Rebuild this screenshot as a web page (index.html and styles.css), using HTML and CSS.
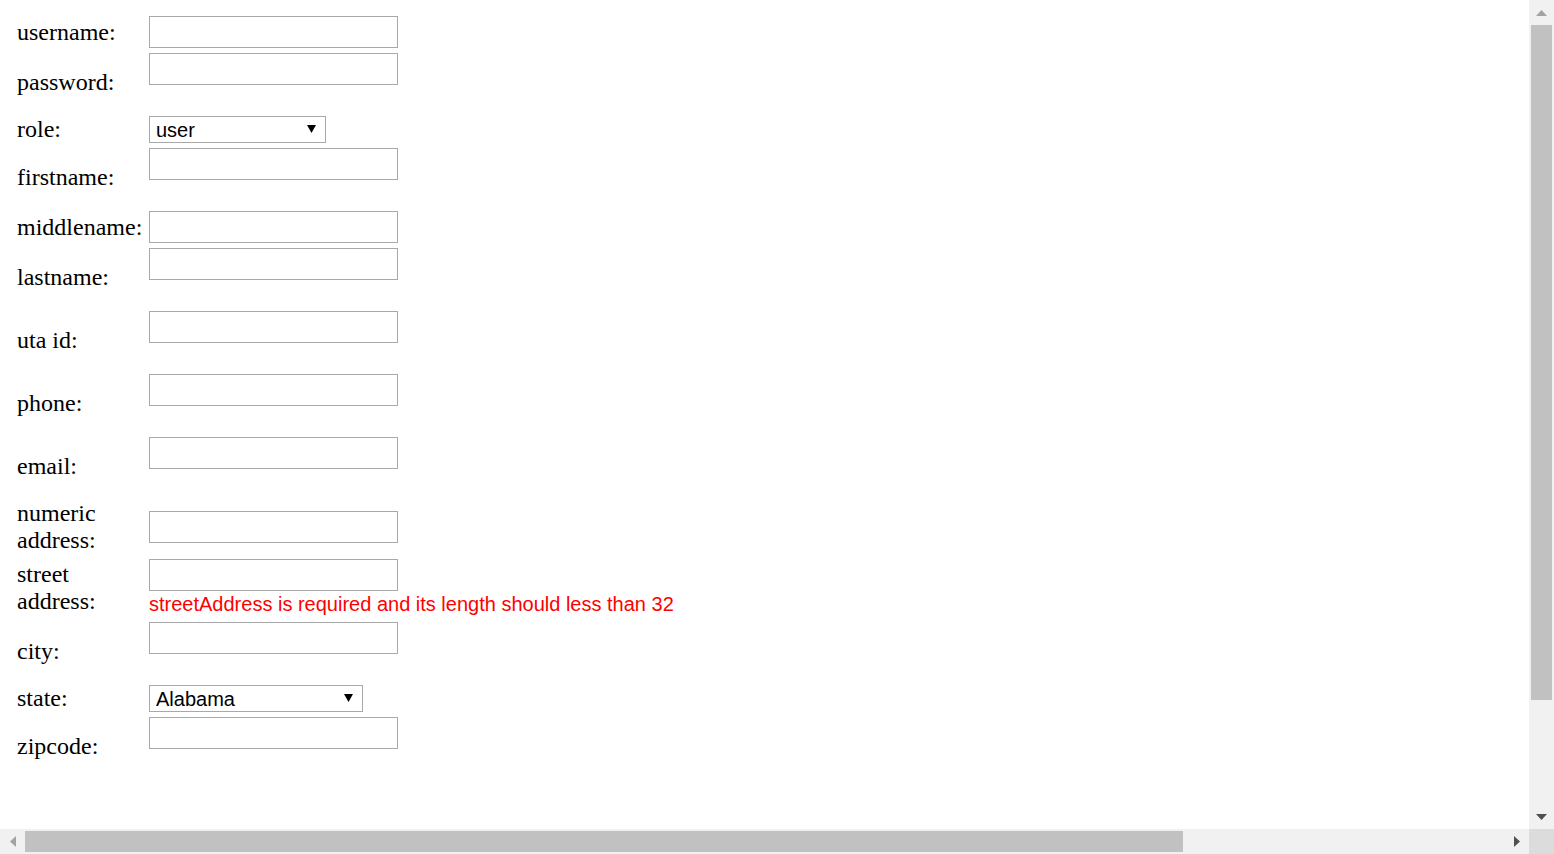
FILE: index.html
```html
<!DOCTYPE html>
<html lang="en">
<head>
<meta charset="utf-8">
<title>Register</title>
<link rel="stylesheet" href="styles.css">
</head>
<body>
<form class="reg-form">
  <table class="form-table">
    <tbody>
      <tr>
        <td class="lbl">username:</td>
        <td class="fld"><input class="txt" type="text" name="username"></td>
      </tr>
      <tr>
        <td class="lbl">password:</td>
        <td class="fld"><input class="txt" type="password" name="password"><div class="err"></div></td>
      </tr>
      <tr>
        <td class="lbl">role:</td>
        <td class="fld">
          <span class="sel">
            <select class="selbox sel-role" name="role">
              <option>user</option>
              <option>admin</option>
            </select>
            <svg class="caret" width="9" height="8" viewBox="0 0 9 8"><polygon points="0,0 9,0 4.5,8" fill="#000"/></svg>
          </span>
        </td>
      </tr>
      <tr>
        <td class="lbl">firstname:</td>
        <td class="fld"><input class="txt" type="text" name="firstname"><div class="err"></div></td>
      </tr>
      <tr>
        <td class="lbl">middlename:</td>
        <td class="fld"><input class="txt" type="text" name="middlename"></td>
      </tr>
      <tr>
        <td class="lbl">lastname:</td>
        <td class="fld"><input class="txt" type="text" name="lastname"><div class="err"></div></td>
      </tr>
      <tr>
        <td class="lbl">uta id:</td>
        <td class="fld"><input class="txt" type="text" name="utaid"><div class="err"></div></td>
      </tr>
      <tr>
        <td class="lbl">phone:</td>
        <td class="fld"><input class="txt" type="text" name="phone"><div class="err"></div></td>
      </tr>
      <tr>
        <td class="lbl">email:</td>
        <td class="fld"><input class="txt" type="text" name="email"><div class="err"></div></td>
      </tr>
      <tr>
        <td class="lbl">numeric address:</td>
        <td class="fld"><input class="txt" type="text" name="numericAddress"></td>
      </tr>
      <tr>
        <td class="lbl">street address:</td>
        <td class="fld"><input class="txt" type="text" name="streetAddress"><div class="err">streetAddress is required and its length should less than 32</div></td>
      </tr>
      <tr>
        <td class="lbl">city:</td>
        <td class="fld"><input class="txt" type="text" name="city"><div class="err"></div></td>
      </tr>
      <tr>
        <td class="lbl">state:</td>
        <td class="fld">
          <span class="sel">
            <select class="selbox sel-state" name="state">
              <option>Alabama</option>
              <option>Alaska</option>
              <option>Arizona</option>
              <option>Arkansas</option>
              <option>California</option>
              <option>Colorado</option>
              <option>Connecticut</option>
              <option>Delaware</option>
              <option>Florida</option>
              <option>Georgia</option>
              <option>Texas</option>
            </select>
            <svg class="caret" width="9" height="8" viewBox="0 0 9 8"><polygon points="0,0 9,0 4.5,8" fill="#000"/></svg>
          </span>
        </td>
      </tr>
      <tr>
        <td class="lbl">zipcode:</td>
        <td class="fld"><input class="txt" type="text" name="zipcode"><div class="err"></div></td>
      </tr>
    </tbody>
  </table>
</form>

<div class="vbar" aria-hidden="true">
  <div class="sb-btn"><svg width="11" height="6" viewBox="0 0 11 6"><polygon points="5.5,0 11,6 0,6" fill="#a3a3a3"/></svg></div>
  <div class="vthumb"></div>
  <div class="sb-fill"></div>
  <div class="sb-btn"><svg width="11" height="6" viewBox="0 0 11 6"><polygon points="0,0 11,0 5.5,6" fill="#505050"/></svg></div>
</div>
<div class="hbar" aria-hidden="true">
  <div class="sb-btn"><svg width="6" height="11" viewBox="0 0 6 11"><polygon points="0,5.5 6,0 6,11" fill="#a3a3a3"/></svg></div>
  <div class="hthumb"></div>
  <div class="sb-fill"></div>
  <div class="sb-btn"><svg width="6" height="11" viewBox="0 0 6 11"><polygon points="0,0 6,5.5 0,11" fill="#505050"/></svg></div>
</div>
<div class="sb-corner" aria-hidden="true"></div>
</body>
</html>
```

FILE: styles.css
```css
html, body {
  overflow: hidden;
}

body {
  margin: 12px;
  background: #fff;
  color: #000;
  font-family: "Liberation Serif", "Times New Roman", serif;
  font-size: 24px;
}

.reg-form {
  margin: 0;
}

.form-table {
  border-collapse: separate;
  border-spacing: 3px;
}

.form-table td {
  padding: 1px;
  vertical-align: middle;
}

.form-table td.lbl {
  width: 127px;
  padding-left: 2px;
  font-family: "Liberation Serif", "Times New Roman", serif;
  font-size: 24px;
  line-height: 27px;
}

.fld {
  font-family: "Liberation Sans", Arial, sans-serif;
  font-size: 20px;
}

.txt {
  display: block;
  box-sizing: border-box;
  width: 249px;
  height: 32px;
  margin: 0;
  padding: 0 3px;
  border: 1px solid #a9a9a9;
  border-radius: 0;
  background: #fff;
  font-family: "Liberation Sans", Arial, sans-serif;
  font-size: 20px;
  outline: none;
}

.err {
  height: 26px;
  line-height: 26px;
  font-family: "Liberation Sans", Arial, sans-serif;
  font-size: 20px;
  color: #ff0000;
  white-space: nowrap;
}

.sel {
  position: relative;
  display: block;
  width: max-content;
}

.selbox {
  display: block;
  box-sizing: border-box;
  height: 27px;
  margin: 0;
  padding: 1px 0 0 6px;
  border: 1px solid #a9a9a9;
  border-radius: 0;
  background: #fff;
  color: #000;
  font-family: "Liberation Sans", Arial, sans-serif;
  font-size: 20px;
  line-height: 23px;
  -webkit-appearance: none;
  appearance: none;
  outline: none;
}

.sel-role {
  width: 177px;
}

.sel-state {
  width: 214px;
}

.caret {
  position: absolute;
  top: 9px;
  right: 10px;
  pointer-events: none;
}

/* emulated window scrollbars */
.vbar {
  position: fixed;
  top: 0;
  right: 0;
  width: 25px;
  height: 829px;
  background: #f1f1f1;
  display: flex;
  flex-direction: column;
}

.hbar {
  position: fixed;
  left: 0;
  bottom: 0;
  width: 1529px;
  height: 25px;
  background: #f1f1f1;
  display: flex;
  flex-direction: row;
}

.sb-btn {
  flex: 0 0 25px;
  display: flex;
  align-items: center;
  justify-content: center;
}

.sb-btn svg {
  display: block;
}

.sb-fill {
  flex: 1 1 auto;
}

.vthumb {
  flex: 0 0 675px;
  margin: 0 2px;
  background: #c1c1c1;
}

.hthumb {
  flex: 0 0 1158px;
  margin: 2px 0;
  background: #c1c1c1;
}

.sb-corner {
  position: fixed;
  right: 0;
  bottom: 0;
  width: 25px;
  height: 25px;
  background: #dcdcdc;
}
```
